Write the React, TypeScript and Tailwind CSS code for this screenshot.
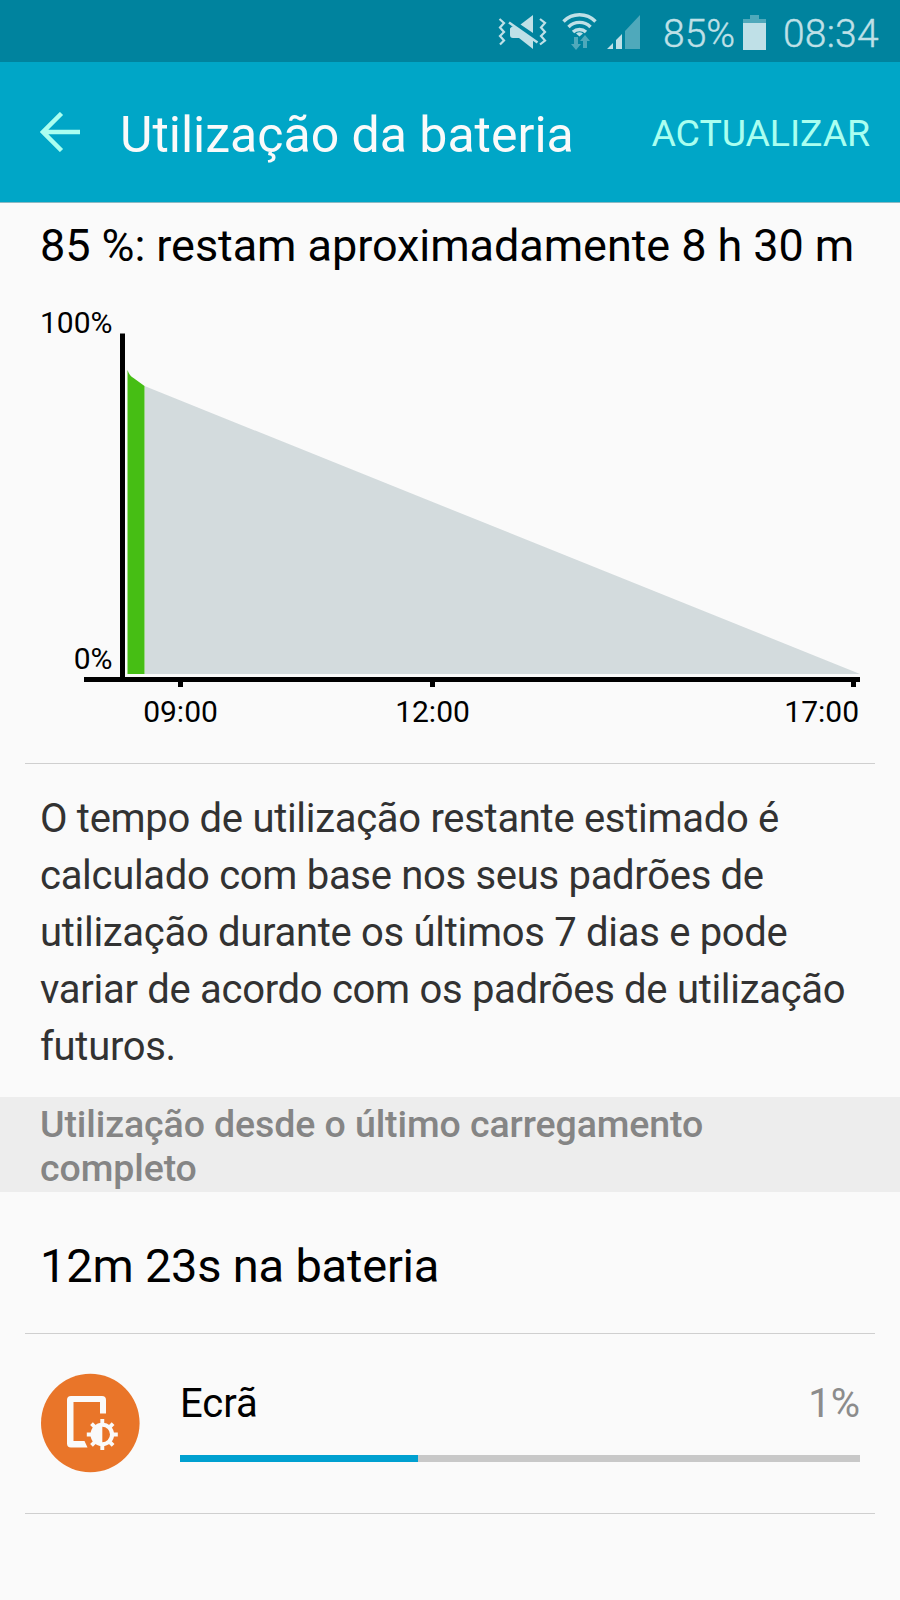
import React from "react";

const StatusBar = () => {
  return (
    <div className="h-[62px] bg-[#00839e] flex items-center text-[#bfe0e7] font-light [-webkit-text-stroke:0.4px_#bfe0e7] text-[39px] leading-none pl-[498px]">
      <svg width="144" height="62" viewBox="498 0 144 62" className="shrink-0" fill="none">
        <g stroke="#bfe0e7" strokeWidth="2.200">
          <path d="M499.500 19l4.500 4-4 4.500 4 4.500-4 4 4 4.500-4 4" />
          <path d="M540 19l5 4-4 4.500 4 4.500-4 4 4 4.500-5 4" />
        </g>
        <path d="M520.500 24.500L533 15v18z" fill="#bfe0e7" />
        <path d="M510 28.500l2-2h3L533 39.500V49L519 38h-6a3 3 0 0 1-3-3z" fill="#bfe0e7" />
        <path d="M509 22.500L537.500 42.500" stroke="#bfe0e7" strokeWidth="2.500" />
        <g stroke="#bfe0e7" strokeWidth="3.400">
          <path d="M563.500 21.500a22.500 22.500 0 0 1 32 0" />
          <path d="M568.500 27a15.500 15.500 0 0 1 22 0" />
          <path d="M573 32a9.500 9.500 0 0 1 13 0" />
        </g>
        <path d="M576 33.500q3.500-2.500 7 0l-3.500 3z" fill="#bfe0e7" />
        <path d="M574 37h4v7h3l-5 6-5-6h3zM583 48h4v-7h3l-5-6-5 6h3z" fill="#4fa9bb" />
        <path d="M607 49l6-6v6zM616 49V40l6-6v15z" fill="#bfe0e7" />
        <path d="M625 49V31l15-16v34z" fill="#4fa9bb" />
      </svg>
      <span className="ml-[21px] w-[80px] pt-[7px]">85%</span>
      <svg width="23" height="36" viewBox="0 0 23 36" className="shrink-0 mt-px">
        <path d="M7 1h9v4h7v5H0V5h7z" fill="#4fa9bb" />
        <path d="M0 9h23v27H0z" fill="#bfe0e7" />
      </svg>
      <span className="ml-[17px] pt-[7px] tracking-[0.2px]">08:34</span>
    </div>
  );
};

const TitleBar = () => {
  return (
    <header className="h-[141px] bg-[#00a6c7] border-b border-[#8cb9c3] flex items-center">
      <svg width="40" height="40" viewBox="0 0 40 40" className="ml-10 shrink-0" fill="none" stroke="#aafff0" strokeWidth="4.500">
        <path d="M40 20H3M21.500 1.500L3 20l18.500 18.500" />
      </svg>
      <h1 className="ml-10 pt-[6px] text-[50px] leading-none text-[#fafafa] whitespace-nowrap">
        Utilização da bateria
      </h1>
      <button className="ml-auto mr-[30px] pt-[4px] text-[37.5px] leading-none tracking-[-0.1px] text-[#aafff0]">
        ACTUALIZAR
      </button>
    </header>
  );
};

const BatteryChart = () => {
  return (
    <svg width="900" height="475" viewBox="0 288 900 475" className="block" fontSize="30">
      <path d="M144.500 386L860 674H144.500z" fill="#d3dbdd" />
      <path d="M127.500 370q2 6 6 8l11 8v288h-17z" fill="#46be14" />
      <path d="M120 333.500h5V677h735v5h-4v5h-5v-5H435v5h-5v-5H183v5h-5v-5H84v-5h36z" fill="#000" />
      <text x="112.500" y="333" textAnchor="end">100%</text>
      <text x="112.500" y="669" textAnchor="end">0%</text>
      <text x="180.500" y="722" textAnchor="middle">09:00</text>
      <text x="432.500" y="722" textAnchor="middle">12:00</text>
      <text x="859" y="722" textAnchor="end">17:00</text>
    </svg>
  );
};

const Divider = () => <div className="mx-[25px] h-px bg-[#cfcfcf]" />;

const ScreenIcon = () => {
  return (
    <svg width="100" height="100" viewBox="0 0 100 100" className="shrink-0 mt-px">
      <circle cx="50.300" cy="50" r="49.300" fill="#e97529" />
      <path d="M66 40.500h-6V29H33.500v39h11l3 6.500H31a4 4 0 0 1-4-4V27a4 4 0 0 1 4-4h31a4 4 0 0 1 4 4z" fill="#fafafa" />
      <g transform="translate(62.300 61.500)">
        <path
          d="M0-15.500V15.500M-15.500 0H15.500M-10.800-10.800L10.800 10.800M10.800-10.800L-10.800 10.800"
          stroke="#fafafa"
          strokeWidth="3.900"
        />
        <circle r="11.800" fill="#fafafa" />
        <path d="M0-7.700a7.700 7.700 0 0 1 0 15.400z" fill="#e97529" />
      </g>
    </svg>
  );
};

const App = () => {
  return (
    <div className="w-[900px] h-[1600px] overflow-hidden bg-[#fafafa] text-black font-['Roboto',sans-serif]">
      <StatusBar />
      <TitleBar />
      <h2 className="h-[85px] pt-[20px] pl-10 text-[45px] leading-[45px] tracking-[-0.07px] whitespace-nowrap">
        85 %: restam aproximadamente 8 h 30 m
      </h2>
      <BatteryChart />
      <Divider />
      <p className="h-[333px] pt-[26px] pl-10 pr-10 text-[40px] leading-[57px] tracking-[-0.3px] text-[#323232]">
        O tempo de utilização restante estimado é
        <br />
        calculado com base nos seus padrões de
        <br />
        utilização durante os últimos 7 dias e pode
        <br />
        variar de acordo com os padrões de utilização
        <br />
        futuros.
      </p>
      <h3 className="h-[95px] pt-[5px] pl-10 bg-[#ededed] text-[37.5px] leading-[44px] tracking-[-0.1px] font-medium text-[#858585]">
        Utilização desde o último carregamento
        <br />
        completo
      </h3>
      <div className="h-[141px] pl-10 pt-[7px] flex items-center text-[47px] tracking-[-0.2px]">
        12m 23s na bateria
      </div>
      <Divider />
      <div className="h-[179px] pb-[2px] flex items-center pl-10 pr-10">
        <ScreenIcon />
        <div className="ml-10 -mt-[4px] flex-1">
          <div className="flex justify-between text-[40px] leading-[48px]">
            <span>Ecrã</span>
            <span className="text-[#8c8c8c]">1%</span>
          </div>
          <div className="mt-[27px] h-[7px] bg-[#c8c8c8]">
            <div className="h-full w-[238px] bg-[#00a0d0]" />
          </div>
        </div>
      </div>
      <Divider />
    </div>
  );
};

export default App;
